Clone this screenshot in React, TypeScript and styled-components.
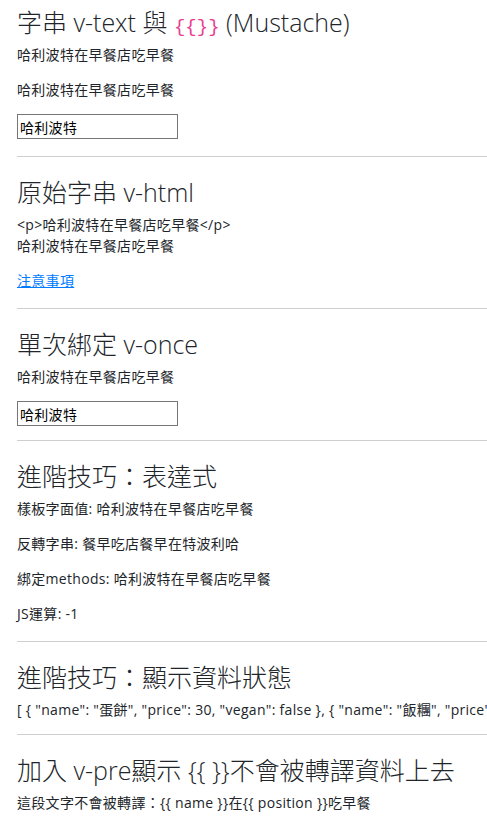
import React from 'react';
import styled, { createGlobalStyle } from 'styled-components';

const GlobalStyle = createGlobalStyle`
  html, body {
    margin: 0;
    padding: 0;
    overflow-x: hidden;
    background: #fff;
  }
  body {
    font-family: "Open Sans", "Noto Sans CJK TC", sans-serif;
    color: #212529;
    font-size: 14px;
    line-height: 21px;
    letter-spacing: 0.3px;
  }
`;

const breakfast = [
  { name: '蛋餅', price: 30, vegan: false },
  { name: '飯糰', price: 35, vegan: false },
  { name: '小籠包', price: 60, vegan: false },
];

const text = '哈利波特在早餐店吃早餐';

export default function App() {
  const reversed = text.split('').reverse().join('');
  const json = JSON.stringify(breakfast, null, 1).replace(/\n\s*/g, ' ');

  return (
    <Page>
      <GlobalStyle />
      <Section first>
        <Title>
          字串 v-text 與 <Code>{'{{}}'}</Code> (Mustache)
        </Title>
        <Para>{text}</Para>
        <Para>{text}</Para>
        <Field defaultValue="哈利波特" />
      </Section>

      <Section>
        <Title>原始字串 v-html</Title>
        <Block>{'<p>' + text + '</p>'}</Block>
        <Para>{text}</Para>
        <Para>
          <Link href="#">注意事項</Link>
        </Para>
      </Section>

      <Section tight>
        <Title>單次綁定 v-once</Title>
        <Para>{text}</Para>
        <Field defaultValue="哈利波特" />
      </Section>

      <Section>
        <Title>進階技巧：表達式</Title>
        <Para>樣板字面值: {text}</Para>
        <Para>反轉字串: {reversed}</Para>
        <Para>綁定methods: {text}</Para>
        <Para>JS運算: -1</Para>
      </Section>

      <Section tight>
        <Title>進階技巧：顯示資料狀態</Title>
        <Json>{json}</Json>
      </Section>

      <Section last>
        <Title>加入 v-pre顯示 {'{{ }}'}不會被轉譯資料上去</Title>
        <Para>這段文字不會被轉譯：{'{{ name }}'}在{'{{ position }}'}吃早餐</Para>
      </Section>
    </Page>
  );
}

const Page = styled.div`
  padding-left: 17px;
`;

const Section = styled.section<{ first?: boolean; last?: boolean; tight?: boolean }>`
  padding-top: ${p => (p.first ? '7px' : '20px')};
  padding-bottom: ${p => (p.last ? '20px' : p.tight ? '14px' : '17px')};
  border-bottom: ${p => (p.last ? 'none' : '1px solid #cfcfcf')};

  & > *:last-child {
    margin-bottom: 0;
  }
`;

const Title = styled.h2`
  margin: 0 0 7px;
  font-size: 25px;
  line-height: 30px;
  font-weight: 300;
  letter-spacing: 0;
  white-space: nowrap;
`;

const Code = styled.code`
  font-family: "Liberation Mono", "DejaVu Sans Mono", monospace;
  font-size: 19px;
  line-height: 0;
  color: #e83e8c;
`;

const Para = styled.p`
  margin: 0 0 14px;
  white-space: nowrap;
`;

const Block = styled.div`
  white-space: nowrap;
`;

const Json = styled.p`
  margin: 0;
  white-space: nowrap;
  overflow: hidden;
`;

const Link = styled.a`
  color: #007bff;
  text-decoration: underline;
`;

const Field = styled.input`
  display: block;
  box-sizing: border-box;
  width: 161px;
  height: 25px;
  margin: 0;
  padding: 0 2px;
  border: 1px solid #767676;
  font-family: "Open Sans", "Noto Sans CJK TC", sans-serif;
  font-size: 14px;
  letter-spacing: 0.3px;
  color: #000;
`;
